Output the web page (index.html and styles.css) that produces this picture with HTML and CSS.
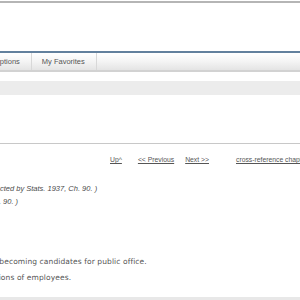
FILE: index.html
```html
<!DOCTYPE html>
<html lang="en">
<head>
    <meta charset="UTF-8">
    <title>Codes Display Text</title>
    <link rel="stylesheet" href="styles.css">
</head>
<body>
    <div id="page">
        <div id="header"></div>
        <ul class="tabs">
            <li>Options</li>
            <li>My Favorites</li>
        </ul>
        <div class="search-band"></div>

        <div class="content">
            <div class="nav-links">
                <a href="#" class="up">Up^</a>
                <a href="#" class="prev">&lt;&lt; Previous</a>
                <a href="#" class="next">Next &gt;&gt;</a>
                <a href="#" class="xref">cross-reference chapter</a>
            </div>

            <div class="history">
                <p class="h1">( Article 3 enacted by Stats. 1937, Ch. 90. )</p>
                <p class="h2">( Enacted by Stats. 1937, Ch. 90. )</p>
            </div>

            <div class="sections">
                <p class="s1">from becoming candidates for public office.</p>
                <p class="s2">Political affiliations of employees.</p>
            </div>
        </div>
        <div id="footer"></div>
    </div>
</body>
</html>
```

FILE: styles.css
```css
body {
    margin: 0;
    padding: 0;
    background: #ffffff;
    font-family: 'Liberation Sans', Arial, sans-serif;
    overflow: hidden;
}
#page {
    width: 300px;
    height: 300px;
    overflow: hidden;
    padding-top: 1px;
}
#header {
    height: 48px;
    border-top: 2px solid #b5b5b5;
    border-bottom: 2px solid #62809d;
}
.tabs {
    list-style: none;
    margin: 0;
    padding: 0;
    height: 17px;
    display: flex;
    background: linear-gradient(#ffffff, #f4f4f4 50%, #e4e4e4);
    border-bottom: 2px solid #d2d2d2;
}
.tabs li {
    font-size: 7.5px;
    color: #555;
    line-height: 17px;
    padding: 0 11px 0 10px;
    border-right: 1px solid #d8d8d8;
}
.tabs li:first-child {
    margin-left: -16px;
}
.search-band {
    margin-top: 9px;
    height: 14px;
    background: #ececec;
}
.content {
    margin-top: 48px;
    border-top: 1px solid #c8c8c8;
}
.nav-links {
    padding: 11px 0 0 110px;
    display: flex;
    font-size: 6.8px;
    line-height: 10px;
}
.nav-links a {
    color: #555;
    white-space: nowrap;
}
.nav-links .up { margin-right: 16px; }
.nav-links .prev { margin-right: 11px; }
.nav-links .next { margin-right: 27px; }
.history {
    margin-top: 17px;
    font-style: italic;
    font-size: 7.5px;
    color: #4a4a4a;
    line-height: 13px;
}
.history p {
    margin: 0;
    white-space: nowrap;
}
.history .h1 { margin-left: -46px; }
.history .h2 { margin-left: -97px; }
.sections {
    margin-top: 46px;
    font-family: 'DejaVu Sans', Verdana, sans-serif;
    font-size: 7.5px;
    letter-spacing: 0.1px;
    color: #555;
    line-height: 16px;
}
.sections p {
    margin: 0;
    white-space: nowrap;
}
.sections .s1 { margin-left: -21px; }
.sections .s2 { margin-left: -58px; }
#footer {
    margin-top: 11px;
    height: 10px;
    background: #e8e8e8;
}
```
